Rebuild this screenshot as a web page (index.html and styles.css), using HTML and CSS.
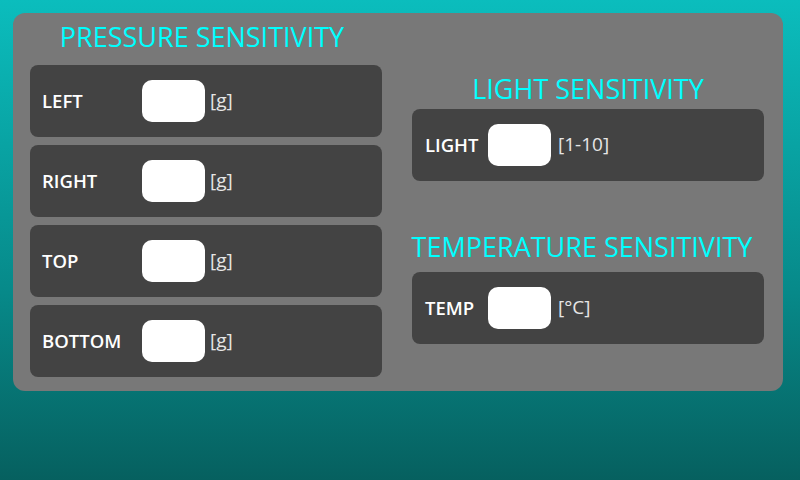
FILE: index.html
```html
<!DOCTYPE html>
<html>
<head>
<meta charset="utf-8">
<link rel="stylesheet" href="styles.css">
</head>
<body>
<div class="screen">
  <div class="panel">
    <div class="col col-left">
      <h2 class="title title-pressure">PRESSURE SENSITIVITY</h2>
      <div class="row"><span class="label">LEFT</span><span class="input"></span><span class="unit">[g]</span></div>
      <div class="row"><span class="label">RIGHT</span><span class="input"></span><span class="unit">[g]</span></div>
      <div class="row"><span class="label">TOP</span><span class="input"></span><span class="unit">[g]</span></div>
      <div class="row"><span class="label">BOTTOM</span><span class="input"></span><span class="unit">[g]</span></div>
    </div>
    <div class="col col-right">
      <h2 class="title title-light">LIGHT SENSITIVITY</h2>
      <div class="row"><span class="label">LIGHT</span><span class="input"></span><span class="unit">[1-10]</span></div>
      <h2 class="title title-temp">TEMPERATURE SENSITIVITY</h2>
      <div class="row"><span class="label">TEMP</span><span class="input"></span><span class="unit">[°C]</span></div>
    </div>
  </div>
</div>
</body>
</html>
```
FILE: styles.css
```css
html, body {
  margin: 0;
  padding: 0;
}
body {
  width: 800px;
  height: 480px;
  overflow: hidden;
  font-family: "Open Sans", "Noto Sans", sans-serif;
}
.screen {
  width: 800px;
  height: 480px;
  box-sizing: border-box;
  padding: 13px 17px 0 13px;
  background: linear-gradient(to bottom, #0bbdbd 0%, #078a8a 60%, #06605f 100%);
}
.panel {
  height: 378px;
  box-sizing: border-box;
  background: #787878;
  border-radius: 12px;
  padding: 0 19px 0 17px;
  display: flex;
  gap: 30px;
}
.col {
  width: 352px;
  display: flex;
  flex-direction: column;
}
.title {
  margin: 0;
  color: #00ffff;
  font-weight: 400;
  font-size: 27px;
  line-height: 30px;
  text-align: center;
  white-space: nowrap;
}
.title-pressure {
  margin-top: 9px;
  margin-bottom: 13px;
  margin-left: -4px;
  margin-right: 4px;
}
.title-light {
  margin-top: 61px;
  margin-bottom: 5px;
}
.title-temp {
  margin-top: 43px;
  margin-bottom: 10px;
  margin-left: -6px;
  margin-right: 6px;
}
.row {
  height: 72px;
  background: #434343;
  border-radius: 8px;
  display: flex;
  align-items: center;
  margin-bottom: 8px;
  box-sizing: border-box;
  padding-left: 12px;
}
.col-right .row {
  padding-left: 13px;
}
.label {
  color: #ffffff;
  font-weight: 600;
  font-size: 18.5px;
  width: 100px;
  padding-bottom: 2px;
}
.col-right .label {
  width: 63px;
}
.input {
  width: 63px;
  height: 42px;
  background: #ffffff;
  border-radius: 10px;
}
.unit {
  color: #e6e6e6;
  font-size: 19px;
  margin-left: 5px;
  padding-bottom: 2px;
}
.col-right .unit {
  margin-left: 7px;
}
```
